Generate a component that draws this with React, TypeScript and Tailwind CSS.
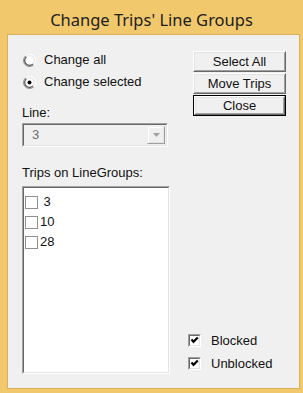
import React from 'react';

const sunkenOuter = 'border border-t-[#a0a0a0] border-l-[#a0a0a0] border-b-white border-r-white';
const sunkenInner = 'border border-t-[#696969] border-l-[#696969] border-b-[#e3e3e3] border-r-[#e3e3e3]';

function Radio({ checked, label }: { checked: boolean; label: string }) {
  return (
    <div className="flex h-[22px] items-center">
      <svg width="13" height="13" viewBox="0 0 13 13" className="ml-px shrink-0">
        <circle cx="6.5" cy="6.5" r="6" fill="none" stroke="#909090" strokeWidth="1" strokeDasharray="19 19" transform="rotate(45 6.5 6.5)" />
        <circle cx="6.5" cy="6.5" r="6" fill="none" stroke="#ffffff" strokeWidth="1" strokeDasharray="0 19 19" transform="rotate(45 6.5 6.5)" />
        <circle cx="6.5" cy="6.5" r="5" fill="#ffffff" />
        <circle cx="6.5" cy="6.5" r="4.8" fill="none" stroke="#505050" strokeWidth="1.2" strokeDasharray="15.1 15.1" transform="rotate(45 6.5 6.5)" />
        <circle cx="6.5" cy="6.5" r="4.8" fill="none" stroke="#e3e3e3" strokeWidth="1" strokeDasharray="0 15.1 15.1" transform="rotate(45 6.5 6.5)" />
        {checked && <circle cx="6.5" cy="6.5" r="2" fill="#000000" />}
      </svg>
      <span className="ml-[8px]">{label}</span>
    </div>
  );
}

function Check3D({ label }: { label: string }) {
  return (
    <div className="flex h-[23px] items-center">
      <div className={`h-[13px] w-[13px] ${sunkenOuter}`}>
        <div className={`flex h-full w-full items-center justify-center bg-white ${sunkenInner}`}>
          <svg width="9" height="9" viewBox="0 0 9 9">
            <path d="M1.5 3.5 L3.5 5.8 L7.8 1.5" fill="none" stroke="#000" strokeWidth="2.2" />
          </svg>
        </div>
      </div>
      <span className="ml-[10px]">{label}</span>
    </div>
  );
}

function WinButton({ label, isDefault }: { label: string; isDefault?: boolean }) {
  const face = (
    <div className="h-full w-full border border-t-white border-l-white border-b-[#696969] border-r-[#696969]">
      <div className="flex h-full w-full items-center justify-center border border-t-[#e3e3e3] border-l-[#e3e3e3] border-b-[#a0a0a0] border-r-[#a0a0a0] bg-[#f0f0f0]">
        {label}
      </div>
    </div>
  );
  return (
    <div className={`h-[21px] w-[93px] ${isDefault ? 'border border-black' : ''}`}>{face}</div>
  );
}

export default function App() {
  const trips = [' 3', '10', '28'];

  return (
    <div className="flex h-[393px] w-[303px] flex-col bg-[#f1c96c] text-[13px] text-[#111] [font-family:'Liberation_Sans',Arial,sans-serif]">
      <div className="flex h-[34px] items-center justify-center pt-[6px] text-[16.5px] text-[#202020] [font-family:'Noto_Sans',sans-serif]">
        Change Trips' Line Groups
      </div>

      <div className="mb-[4px] ml-[7px] mr-[3px] flex flex-1 border border-[#d7b15c] bg-[#f0f0f0]">
        {/* left column */}
        <div className="flex w-[162px] flex-col pl-[14px]">
          <div className="mt-[14px]">
            <Radio checked={false} label="Change all" />
            <Radio checked label="Change selected" />
          </div>

          <div className="mt-[13px] h-[14px] leading-[14px]">Line:</div>

          <div className={`mt-[3px] h-[24px] w-[146px] ${sunkenOuter}`}>
            <div className={`flex h-full w-full items-center ${sunkenInner} bg-[#f0f0f0]`}>
              <span className="flex-1 pl-[8px] text-[#6d6d6d]">3</span>
              <div className="mr-px h-[18px] w-[18px] border border-t-[#f0f0f0] border-l-[#f0f0f0] border-b-[#a0a0a0] border-r-[#a0a0a0]">
                <div className="flex h-full w-full items-center justify-center border border-t-white border-l-white border-b-[#e3e3e3] border-r-[#e3e3e3]">
                  <svg width="7" height="4" viewBox="0 0 7 4">
                    <path d="M0 0 H7 L3.5 4 Z" fill="#a0a0a0" />
                  </svg>
                </div>
              </div>
            </div>
          </div>

          <div className="mt-[19px] h-[14px] leading-[14px]">Trips on LineGroups:</div>

          <div className={`mt-[6px] h-[188px] w-[148px] ${sunkenOuter}`}>
            <div className={`h-full w-full bg-white pt-[4px] ${sunkenInner}`}>
              {trips.map((t) => (
                <div key={t} className="flex h-[20px] items-center pl-[1px]">
                  <div className="h-[13px] w-[13px] border border-[#8f8f8f] bg-white" />
                  <span className="ml-[2px] whitespace-pre">{t}</span>
                </div>
              ))}
            </div>
          </div>
        </div>

        {/* right column */}
        <div className="flex flex-1 flex-col justify-between pb-[13px] pl-[18px]">
          <div className="ml-[5px] mt-[16px] flex flex-col gap-px">
            <WinButton label="Select All" />
            <WinButton label="Move Trips" />
            <WinButton label="Close" isDefault />
          </div>
          <div>
            <Check3D label="Blocked" />
            <Check3D label="Unblocked" />
          </div>
        </div>
      </div>
    </div>
  );
}
